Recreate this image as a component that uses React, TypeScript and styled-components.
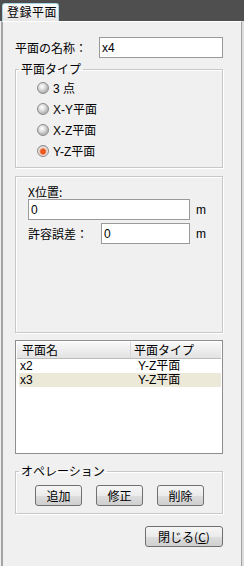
import React, {useState} from 'react';
import styled, {createGlobalStyle} from "styled-components";

const GlobalStyle = createGlobalStyle`
  html, body {
    margin: 0;
    padding: 0;
    background: #f0f0f0;
  }
  body {
    font-family: "Liberation Sans", "Noto Sans CJK JP", sans-serif;
    font-size: 12px;
    color: #000;
  }
`;

type PlaneType = "3pt" | "xy" | "xz" | "yz";

const planeTypes: {key: PlaneType, label: string}[] = [
    {key: "3pt", label: "3 点"},
    {key: "xy", label: "X-Y平面"},
    {key: "xz", label: "X-Z平面"},
    {key: "yz", label: "Y-Z平面"},
];

const planes = [
    {name: "x2", type: "Y-Z平面"},
    {name: "x3", type: "Y-Z平面"},
];

const App = () => {

    const [type, setType] = useState<PlaneType>("yz");
    const [selected, setSelected] = useState(1);

    return (
        <>
            <GlobalStyle/>
            <Window>
                <TopBar>
                    <Tab>登録平面</Tab>
                </TopBar>
                <Panel>
                    <NameRow>
                        <Label>平面の名称：</Label>
                        <TextInput defaultValue="x4" width={124}/>
                    </NameRow>

                    <Group>
                        <Legend>平面タイプ</Legend>
                        <RadioList>
                            {planeTypes.map(p =>
                                <RadioRow key={p.key} onClick={() => setType(p.key)}>
                                    <RadioDot checked={type === p.key}/>
                                    <span>{p.label}</span>
                                </RadioRow>
                            )}
                        </RadioList>
                    </Group>

                    <PositionBox>
                        <Label>X位置:</Label>
                        <InputRow>
                            <TextInput defaultValue="0" width={162}/>
                            <Unit>m</Unit>
                        </InputRow>
                        <InputRow>
                            <Label style={{width: 73}}>許容誤差：</Label>
                            <TextInput defaultValue="0" width={89}/>
                            <Unit>m</Unit>
                        </InputRow>
                    </PositionBox>

                    <ListBox>
                        <ListHeader>
                            <HeaderCell>平面名</HeaderCell>
                            <HeaderCell divider>平面タイプ</HeaderCell>
                        </ListHeader>
                        {planes.map((p, i) =>
                            <ListRow key={p.name} selected={selected === i} onClick={() => setSelected(i)}>
                                <Cell>{p.name}</Cell>
                                <Cell second>{p.type}</Cell>
                            </ListRow>
                        )}
                    </ListBox>

                    <OpGroup>
                        <Legend>オペレーション</Legend>
                        <ButtonRow>
                            <Button>追加</Button>
                            <Button>修正</Button>
                            <Button>削除</Button>
                        </ButtonRow>
                    </OpGroup>

                    <Footer>
                        <Button wide>閉じる(<u>C</u>)</Button>
                    </Footer>
                </Panel>
            </Window>
        </>
    );
};

const Window = styled.div`
  width: 244px;
  height: 566px;
  display: flex;
  flex-direction: column;
  background: #f0f0f0;
  overflow: hidden;
`

const TopBar = styled.div`
  height: 21px;
  background: #4f4f4f;
  display: flex;
  align-items: flex-end;
  padding-left: 2px;
  box-sizing: border-box;
`

const Tab = styled.div`
  height: 18px;
  width: 57px;
  box-sizing: border-box;
  border: 1px solid #a9d3e2;
  border-bottom: none;
  border-radius: 3px 3px 0 0;
  background: linear-gradient(#fdfdfd, #e6e6e6);
  font-family: "Noto Sans CJK JP", sans-serif;
  font-size: 12px;
  line-height: 16px;
  padding-left: 4px;
  letter-spacing: 0.5px;
`

const Panel = styled.div`
  flex: 1;
  margin-left: 1px;
  border-left: 2px solid #a4a4a4;
  border-right: 1px solid #a4a4a4;
  border-top: 1px solid #ffffff;
  margin-right: 2px;
  box-shadow: 2px 0 0 #dcdcdc;
  padding: 15px 18px 0 12px;
  display: flex;
  flex-direction: column;
`

const Label = styled.span`
  font-family: "Noto Sans CJK JP", sans-serif;
  font-size: 12px;
  line-height: 14px;
  white-space: nowrap;
`

const NameRow = styled.div`
  display: flex;
  align-items: center;
  justify-content: space-between;
`

const TextInput = styled.input<{width: number}>`
  width: ${(props) => props.width}px;
  height: 21px;
  box-sizing: border-box;
  border: 1px solid #9a9a9a;
  background: #fff;
  padding: 0 2px;
  margin: 0;
  font-family: "Liberation Sans", "Noto Sans CJK JP", sans-serif;
  font-size: 12px;
  outline: none;
`

const Group = styled.fieldset`
  margin: 4px 0 0 0;
  padding: 0;
  border: 1px solid #c8c8c8;
  box-shadow: inset 1px 1px 0 #fff, 1px 1px 0 #fff;
  min-width: 0;
`

const Legend = styled.legend`
  font-family: "Noto Sans CJK JP", sans-serif;
  font-size: 12px;
  line-height: 14px;
  padding: 0 2px;
  margin-left: 3px;
`

const RadioList = styled.div`
  padding: 1px 0 6px 21px;
  display: flex;
  flex-direction: column;
`

const RadioRow = styled.div`
  height: 21px;
  display: flex;
  align-items: center;
  gap: 4px;
  font-family: "Liberation Sans", "Noto Sans CJK JP", sans-serif;
  cursor: default;
`

const RadioDot = styled.div<{checked?: boolean}>`
  width: 12px;
  height: 12px;
  box-sizing: border-box;
  border-radius: 50%;
  border: 1px solid #8c8c8c;
  background: ${(props) => props.checked
    ? `radial-gradient(circle at 50% 55%, #ff6a2a 0, #e84a10 2px, #f0c0a8 3.5px, #e8e8e8 4.5px, #b8b8b8 6px)`
    : `radial-gradient(circle at 40% 35%, #ffffff 0, #e6e6e6 2.5px, #b4b4b4 6px)`};
`

const PositionBox = styled.div`
  margin-top: 8px;
  height: 157px;
  box-sizing: border-box;
  border: 1px solid #c8c8c8;
  box-shadow: inset 1px 1px 0 #fff, 1px 1px 0 #fff;
  padding: 8px 0 0 12px;
  display: flex;
  flex-direction: column;
  gap: 0;
`

const InputRow = styled.div`
  display: flex;
  align-items: center;
  margin-bottom: 3px;
`

const Unit = styled.span`
  font-family: "Liberation Sans", sans-serif;
  margin-left: 6px;
`

const ListBox = styled.div`
  margin-top: 7px;
  height: 114px;
  box-sizing: border-box;
  border: 1px solid #8e8e8e;
  background: #fff;
  padding: 1px 1px 0 3px;
`

const ListHeader = styled.div`
  display: flex;
  height: 17px;
  box-sizing: border-box;
  margin-left: -2px;
  background: linear-gradient(#f9f9f9, #e2e2e2);
  border-bottom: 1px solid #bcbcbc;
`

const HeaderCell = styled.div<{divider?: boolean}>`
  font-family: "Noto Sans CJK JP", sans-serif;
  line-height: 16px;
  padding-left: ${(props) => props.divider ? `3px` : `5px`};
  width: ${(props) => props.divider ? `auto` : `108px`};
  flex: ${(props) => props.divider ? `1` : `none`};
  border-left: ${(props) => props.divider ? `1px solid #d6d6d6` : `none`};
`

const ListRow = styled.div<{selected?: boolean}>`
  display: flex;
  height: 14px;
  line-height: 14px;
  background: ${(props) => props.selected ? `#ece9d8` : `transparent`};
  cursor: default;
`

const Cell = styled.div<{second?: boolean}>`
  font-family: "Liberation Sans", "Noto Sans CJK JP", sans-serif;
  padding-left: 1px;
  width: ${(props) => props.second ? `auto` : `117px`};
`

const OpGroup = styled(Group)`
  margin-top: 10px;
`

const ButtonRow = styled.div`
  display: flex;
  justify-content: center;
  gap: 14px;
  padding: 7px 0 7px 1px;
`

const Button = styled.button<{wide?: boolean}>`
  width: ${(props) => props.wide ? `78px` : `47px`};
  height: 21px;
  box-sizing: border-box;
  border: 1px solid #707070;
  border-radius: 3px;
  background: linear-gradient(#f6f6f6 0%, #ebebeb 50%, #dddddd 51%, #cfcfcf 100%);
  font-family: "Noto Sans CJK JP", sans-serif;
  font-size: 12px;
  color: #000;
  padding: 0;
  line-height: 18px;
`

const Footer = styled.div`
  display: flex;
  justify-content: flex-end;
  margin-top: 12px;
`

export default App;
